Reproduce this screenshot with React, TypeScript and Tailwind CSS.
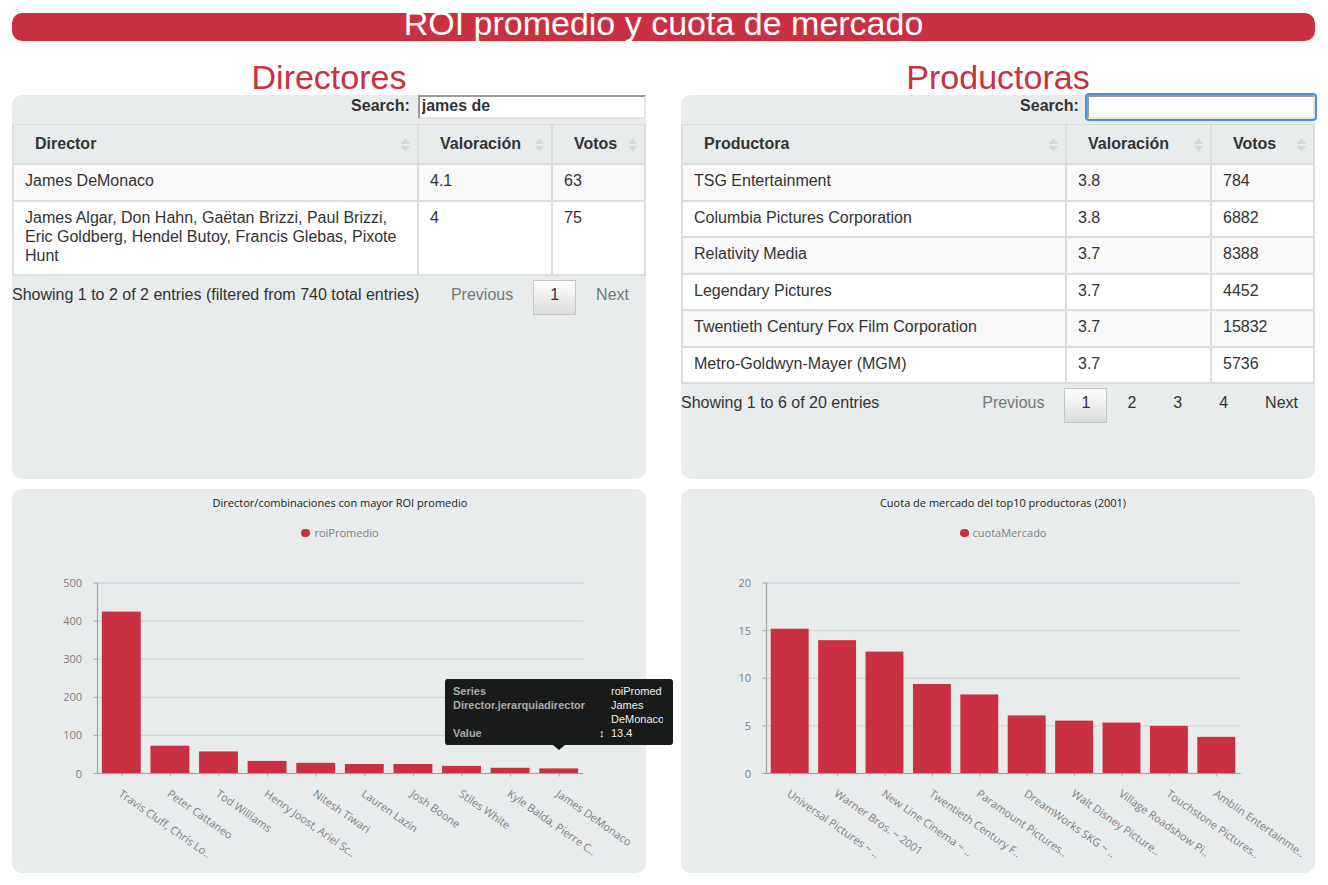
import React from "react";

type Row = { name: string; rating: string; votes: string };
type Bar = { label: string; value: number };

const directors: Row[] = [
  { name: "James DeMonaco", rating: "4.1", votes: "63" },
  {
    name: "James Algar, Don Hahn, Gaëtan Brizzi, Paul Brizzi, Eric Goldberg, Hendel Butoy, Francis Glebas, Pixote Hunt",
    rating: "4",
    votes: "75",
  },
];

const producers: Row[] = [
  { name: "TSG Entertainment", rating: "3.8", votes: "784" },
  { name: "Columbia Pictures Corporation", rating: "3.8", votes: "6882" },
  { name: "Relativity Media", rating: "3.7", votes: "8388" },
  { name: "Legendary Pictures", rating: "3.7", votes: "4452" },
  { name: "Twentieth Century Fox Film Corporation", rating: "3.7", votes: "15832" },
  { name: "Metro-Goldwyn-Mayer (MGM)", rating: "3.7", votes: "5736" },
];

const roiBars: Bar[] = [
  { label: "Travis Cluff, Chris Lo..", value: 425 },
  { label: "Peter Cattaneo", value: 73 },
  { label: "Tod Williams", value: 58 },
  { label: "Henry Joost, Ariel Sc..", value: 33 },
  { label: "Nitesh Tiwari", value: 28 },
  { label: "Lauren Lazin", value: 25 },
  { label: "Josh Boone", value: 25 },
  { label: "Stiles White", value: 20 },
  { label: "Kyle Balda, Pierre C..", value: 15 },
  { label: "James DeMonaco", value: 13.4 },
];

const shareBars: Bar[] = [
  { label: "Universal Pictures ~ ..", value: 15.2 },
  { label: "Warner Bros. ~ 2001", value: 14 },
  { label: "New Line Cinema ~ ..", value: 12.8 },
  { label: "Twentieth Century F..", value: 9.4 },
  { label: "Paramount Pictures..", value: 8.3 },
  { label: "DreamWorks SKG ~ ..", value: 6.1 },
  { label: "Walt Disney Picture..", value: 5.55 },
  { label: "Village Roadshow Pi..", value: 5.35 },
  { label: "Touchstone Pictures..", value: 5 },
  { label: "Amblin Entertainme..", value: 3.85 },
];

function SortIcon() {
  return (
    <svg width="9" height="14" viewBox="0 0 9 14" className="mt-0.5 shrink-0 fill-[#d6d8d9]" aria-hidden="true">
      <path d="M4.5 0 9 6H0z" />
      <path d="M4.5 14 9 8H0z" />
    </svg>
  );
}

function HeaderCell({ text, width }: { text: string; width: string }) {
  return (
    <th scope="col" className={`border-x-2 border-t border-b-2 border-[#ddd] p-0 ${width}`}>
      <button type="button" className="flex w-full items-center justify-between py-[9px] pr-[7px] pl-[21px] text-left leading-5 font-bold">
        {text}
        <SortIcon />
      </button>
    </th>
  );
}

type GridProps = {
  id: string;
  column: string;
  rows: Row[];
  widths: [string, string, string];
  query: string;
  focused?: boolean;
  info: string;
  pages: string[];
  nextEnabled?: boolean;
};

const cell = "border-2 border-[#ddd] px-[11px] pt-1.5 align-top";

function DataGrid({ id, column, rows, widths, query, focused, info, pages, nextEnabled }: GridProps) {
  return (
    <div className="min-h-96 rounded-[10px] bg-[#e8eced] text-base text-[#333]">
      <div className="flex h-[29px] items-start justify-end gap-2">
        <label htmlFor={id} className="leading-[22px] font-bold">
          Search:
        </label>
        <input
          id={id}
          type="text"
          defaultValue={query}
          className={`h-6 w-[36%] border-2 border-t-[#999] border-r-[#e4e4e4] border-b-[#e4e4e4] border-l-[#999] bg-white px-0.5 pb-0.5 font-bold ${
            focused ? "outline-2 outline-[#4a8fe0] rounded-xs" : "outline-none"
          }`}
        />
      </div>
      <table className="w-full table-fixed border-collapse">
        <thead>
          <tr>
            <HeaderCell text={column} width={widths[0]} />
            <HeaderCell text="Valoración" width={widths[1]} />
            <HeaderCell text="Votos" width={widths[2]} />
          </tr>
        </thead>
        <tbody>
          {rows.map((r) => (
            <tr key={r.name} className="bg-white leading-[19px] odd:bg-[#f9f9f9] odd:*:pb-2.5 even:*:pb-[9px]">
              <td className={cell}>{r.name}</td>
              <td className={cell}>{r.rating}</td>
              <td className={cell}>{r.votes}</td>
            </tr>
          ))}
        </tbody>
      </table>
      <div className="flex items-start justify-between pt-1">
        <p className="pt-[5px] leading-5 whitespace-nowrap">{info}</p>
        <nav className="flex gap-[3px]" aria-label={column}>
          <button type="button" disabled className="h-[35px] px-[17px] pb-1.5 text-[#777]">
            Previous
          </button>
          {pages.map((p, i) => (
            <button
              key={p}
              type="button"
              className={
                i === 0
                  ? "h-[35px] border border-[#c5c7c8] bg-linear-to-b from-white to-[#dcdcdc] px-4 pb-1.5"
                  : "h-[35px] border border-transparent px-4 pb-1.5"
              }
            >
              {p}
            </button>
          ))}
          <button type="button" disabled={!nextEnabled} className="h-[35px] px-[17px] pb-1.5 disabled:text-[#777]">
            Next
          </button>
        </nav>
      </div>
    </div>
  );
}

type ChartProps = {
  title: string;
  series: string;
  bars: Bar[];
  max: number;
  step: number;
  plotWidth: number;
  inset: string;
  children?: React.ReactNode;
};

const LEFT = 85.5;
const TOP = 34;
const BASE = 224.5;

function BarChart({ title, series, bars, max, step, plotWidth, inset, children }: ChartProps) {
  const pitch = plotWidth / bars.length;
  const barWidth = pitch * 0.8;
  const y = (v: number) => BASE - (v / max) * (BASE - TOP);
  const ticks = Array.from({ length: max / step + 1 }, (_, i) => i * step);
  return (
    <figure className="relative min-h-96 rounded-[10px] bg-[#e8eced] pt-1.5 font-['Open_Sans','Noto_Sans',sans-serif] text-[11px] leading-4">
      <figcaption className={`text-center text-[#222] ${inset}`}>{title}</figcaption>
      <div className={`flex items-center justify-center gap-1 pt-3.5 text-[#808080] ${inset}`}>
        <span className="h-2 w-[9px] rounded-full bg-[#c93042]" />
        {series}
      </div>
      <svg viewBox="0 0 634 324" className="mt-2 block w-full" role="img" aria-label={title}>
        {ticks.map((t) => (
          <g key={t}>
            <line x1={LEFT} x2={LEFT + plotWidth} y1={y(t)} y2={y(t)} stroke="#d3d6d7" strokeWidth="1.3" />
            <line x1={LEFT - 4} x2={LEFT} y1={y(t)} y2={y(t)} stroke="#a5a7a9" />
            <text x="70" y={y(t) + 4} textAnchor="end" fill="#808080">
              {t}
            </text>
          </g>
        ))}
        {bars.map((b, i) => {
          const cx = LEFT + pitch * (i + 0.5);
          return (
            <g key={b.label}>
              <rect x={cx - barWidth / 2 - 0.5} y={y(b.value)} width={barWidth} height={BASE - y(b.value)} fill="#c93042" />
              <line x1={cx} x2={cx} y1={BASE} y2={BASE + 3} stroke="#a5a7a9" />
              <text transform={`translate(${cx - 4} ${BASE + 22}) rotate(35)`} fill="#808080">
                {b.label}
              </text>
            </g>
          );
        })}
        <path d={`M${LEFT} ${TOP}V${BASE}H${LEFT + plotWidth}`} fill="none" stroke="#a0a2a4" strokeWidth="1.2" />
      </svg>
      {children}
    </figure>
  );
}

function ChartTooltip() {
  return (
    <div className="absolute top-[190px] left-[433px] z-10 w-[228px] rounded-[3px] bg-[#141616]/98 px-2 py-[5px] font-['Liberation_Sans',Arial,sans-serif] text-[11px] leading-[14px] text-[#eee]">
      <dl className="grid grid-cols-[146px_12px_52px]">
        <dt className="col-span-2 font-bold text-[#aaa]">Series</dt>
        <dd>roiPromed</dd>
        <dt className="col-span-2 font-bold text-[#aaa]">Director.jerarquiadirector</dt>
        <dd className="overflow-hidden">James DeMonaco</dd>
        <dt className="font-bold text-[#aaa]">Value</dt>
        <dd>↕</dd>
        <dd>13.4</dd>
      </dl>
      <svg width="12" height="5" viewBox="0 0 12 5" className="absolute top-full left-[108px] fill-[#141616]" aria-hidden="true">
        <path d="M0 0h12L6 5z" />
      </svg>
    </div>
  );
}

export default function App() {
  return (
    <main className="bg-white pt-[13px] pr-[13px] pb-3 pl-3 font-['Liberation_Sans',Arial,sans-serif]">
      <h1 className="rounded-[10px] bg-[#c93042] pb-2 text-center text-[34px] leading-5 text-white">
        ROI promedio y cuota de mercado
      </h1>
      <div className="grid grid-cols-2 gap-x-[35px] pt-[18px]">
        <section>
          <h2 className="text-center text-[34px] leading-9 text-[#c93042]">Directores</h2>
          <DataGrid
            id="search-director"
            column="Director"
            rows={directors}
            widths={["w-auto", "w-[134px]", "w-[93px]"]}
            query="james de"
            info="Showing 1 to 2 of 2 entries (filtered from 740 total entries)"
            pages={["1"]}
          />
        </section>
        <section>
          <h2 className="text-center text-[34px] leading-9 text-[#c93042]">Productoras</h2>
          <DataGrid
            id="search-productora"
            column="Productora"
            rows={producers}
            widths={["w-auto", "w-[145px]", "w-[103px]"]}
            query=""
            focused
            info="Showing 1 to 6 of 20 entries"
            pages={["1", "2", "3", "4"]}
            nextEnabled
          />
        </section>
      </div>
      <div className="grid grid-cols-2 gap-x-[35px] pt-2.5">
        <BarChart
          title="Director/combinaciones con mayor ROI promedio"
          series="roiPromedio"
          bars={roiBars}
          max={500}
          step={100}
          plotWidth={486}
          inset="pl-[22px]"
        >
          <ChartTooltip />
        </BarChart>
        <BarChart
          title="Cuota de mercado del top10 productoras (2001)"
          series="cuotaMercado"
          bars={shareBars}
          max={20}
          step={5}
          plotWidth={474}
          inset="pl-2.5"
        />
      </div>
    </main>
  );
}
